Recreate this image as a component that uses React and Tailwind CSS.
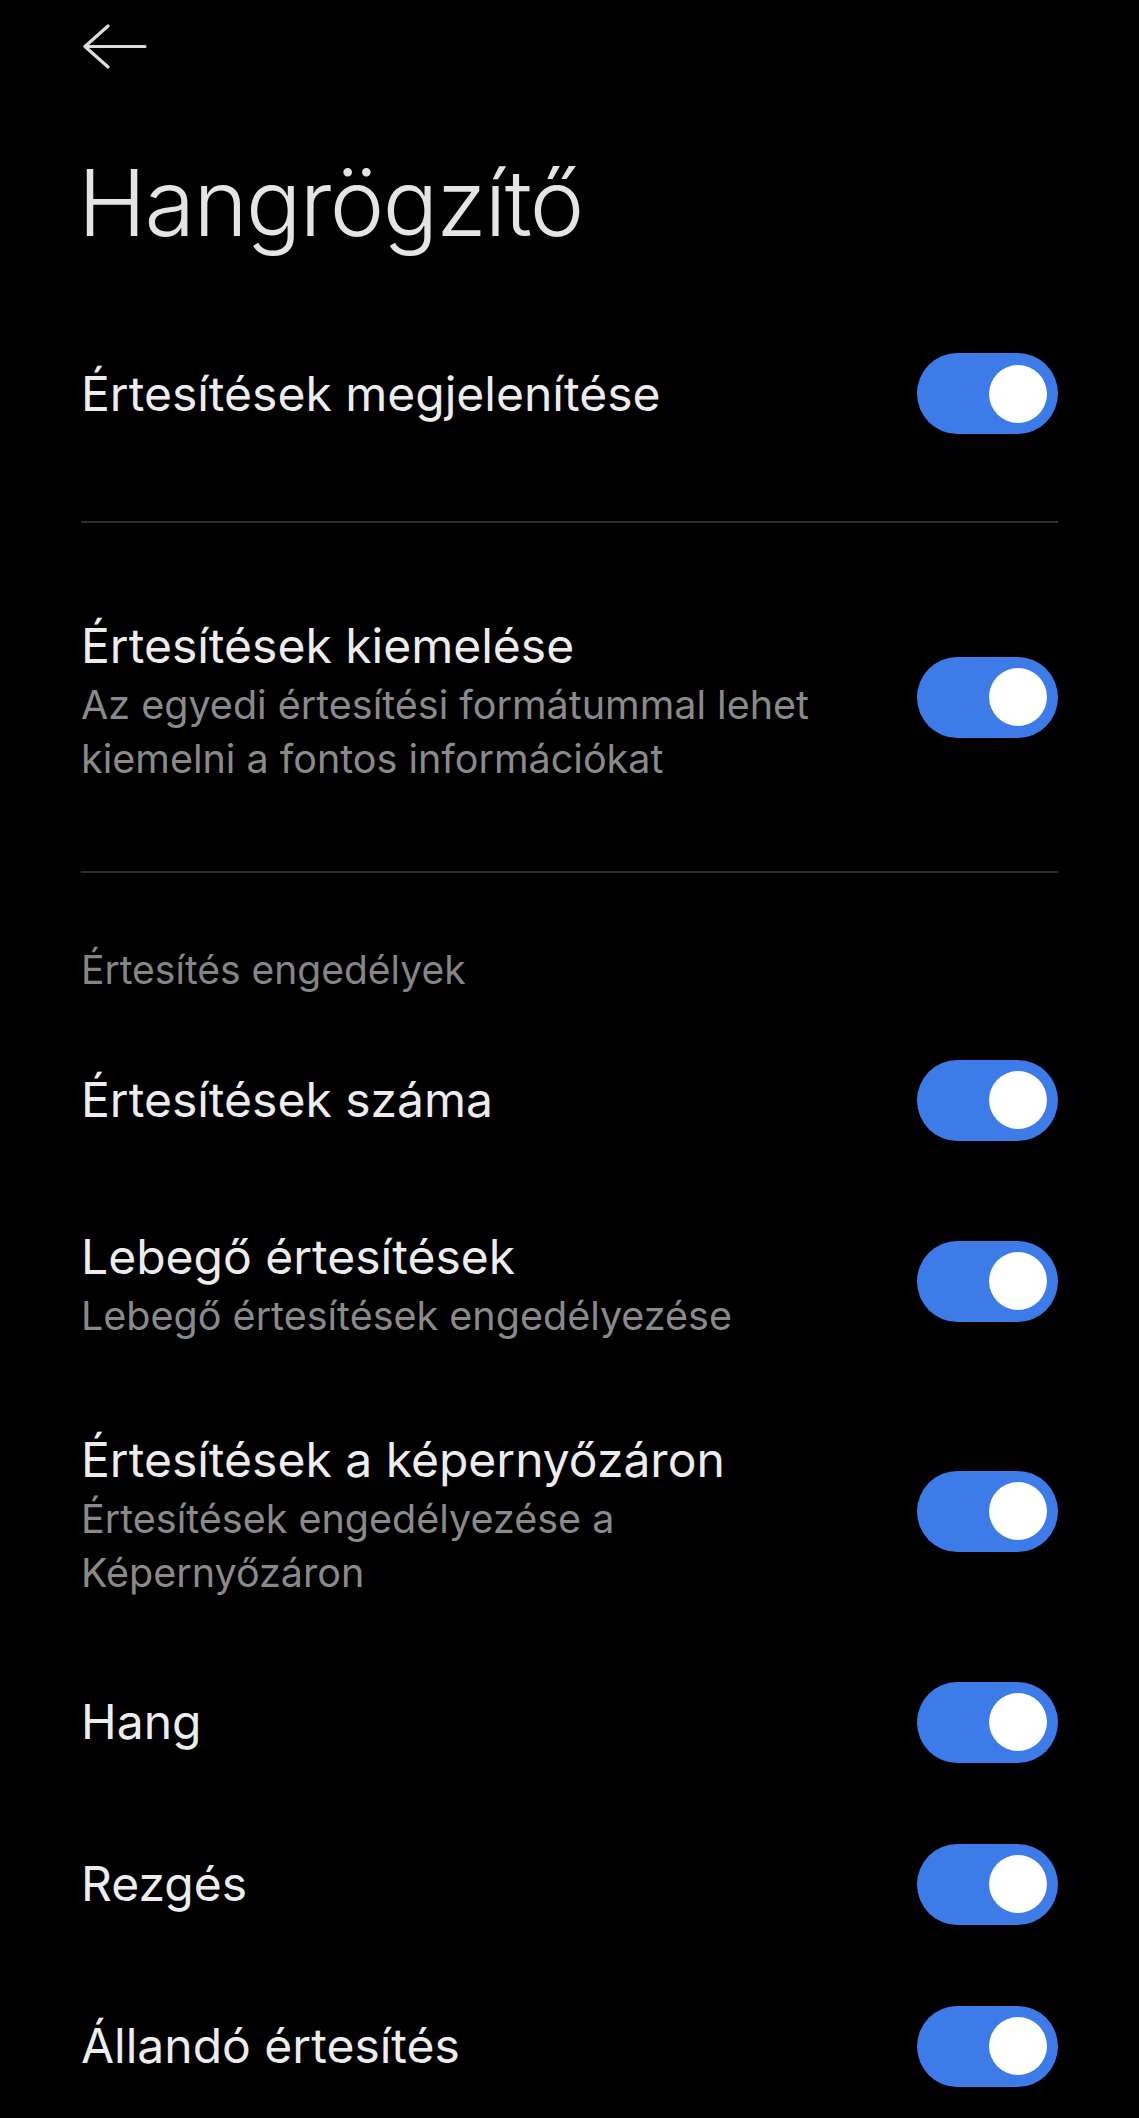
import React from 'react';

function Toggle() {
  return (
    <div className="relative w-[141px] h-[81px] shrink-0 rounded-full bg-[#3d7be8]">
      <div className="absolute right-[11px] top-[11.5px] w-[58px] h-[58px] rounded-full bg-white" />
    </div>
  );
}

function Row({ title, sub, pad = 'py-[40.5px]' }) {
  return (
    <div className={`flex items-center justify-between ${pad}`}>
      <div className={`flex flex-col pr-6 ${sub ? 'translate-y-[3px]' : ''}`}>
        <span className="text-[48px] leading-[64px] text-[#ececec]">{title}</span>
        {sub && (
          <span className="text-[39.5px] leading-[54px] text-[#8a8a8a]">{sub}</span>
        )}
      </div>
      <Toggle />
    </div>
  );
}

export default function App() {
  return (
    <div className="min-h-[2118px] w-full bg-black font-['Inter',sans-serif] overflow-hidden">
      <div className="pt-[24px] pl-[83px]">
        <svg width="64" height="45" viewBox="0 0 64 45" fill="none" stroke="#dcdcdc" strokeWidth="3.2" strokeLinecap="round" strokeLinejoin="round">
          <path d="M62 22.5H2M25 2L2 22.5L25 43" />
        </svg>
      </div>
      <h1 className="mt-[87px] pl-[78px] text-[92px] leading-[94px] font-light text-[#e4e4e4] tracking-[-1.6px]">Hangrögzítő</h1>

      <div className="px-[81px]">
        <div className="mt-[63px]">
          <Row title="Értesítések megjelenítése" pad="pt-[40px] pb-[87px]" />
        </div>
        <div className="h-[2px] bg-[#2e2e2e]" />
        <Row
          title="Értesítések kiemelése"
          sub={<>Az egyedi értesítési formátummal lehet<br />kiemelni a fontos információkat</>}
          pad="py-[88px]"
        />
        <div className="h-[2px] bg-[#2e2e2e]" />

        <div className="pt-[72px] text-[39px] leading-[50px] text-[#858585]">Értesítés engedélyek</div>

        <div className="mt-[24px]">
          <Row title="Értesítések száma" />
          <Row title="Lebegő értesítések" sub="Lebegő értesítések engedélyezése" pad="py-[41px]" />
          <Row
            title="Értesítések a képernyőzáron"
            sub={<>Értesítések engedélyezése a<br />Képernyőzáron</>}
            pad="py-[44px]"
          />
          <Row title="Hang" />
          <Row title="Rezgés" />
          <Row title="Állandó értesítés" />
        </div>
      </div>
    </div>
  );
}
